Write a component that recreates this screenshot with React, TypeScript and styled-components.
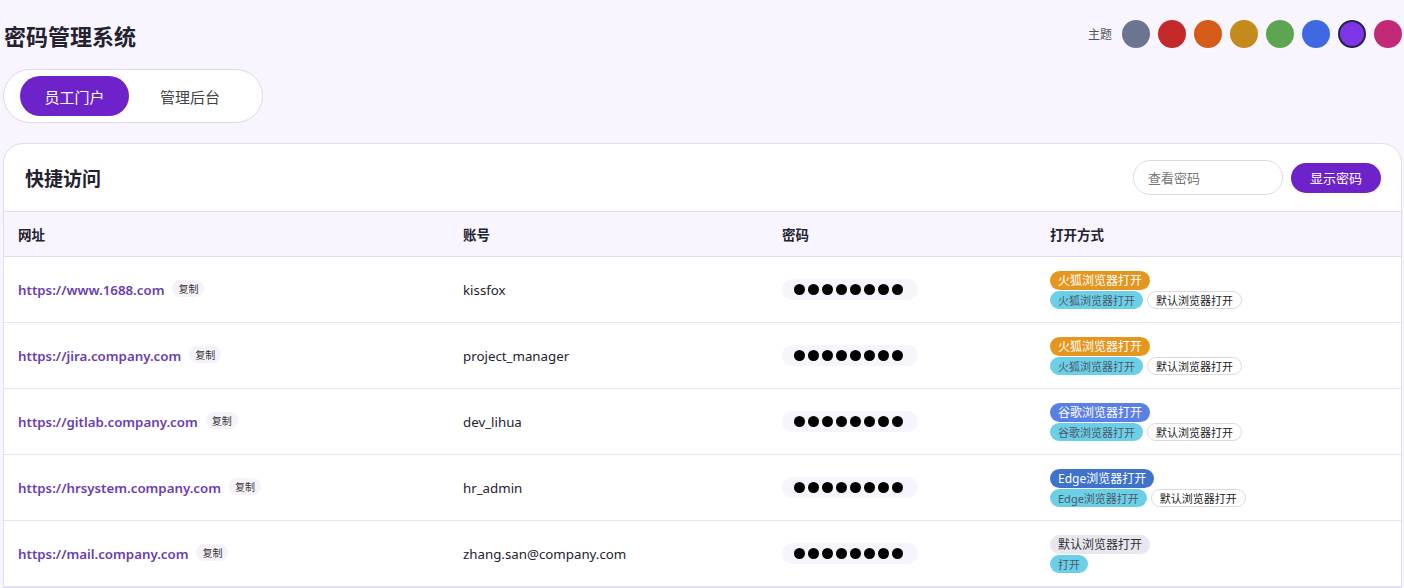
import React, { useState } from 'react';
import styled, { createGlobalStyle } from 'styled-components';

const GlobalStyle = createGlobalStyle`
  html, body {
    margin: 0;
    padding: 0;
    background: #f8f5fe;
    font-family: "Noto Sans", "Noto Sans CJK SC", sans-serif;
    color: #2b2b36;
  }
`;

const Page = styled.div`
  padding: 0 2px 0 3px;
  display: flex;
  flex-direction: column;
`;

const TopBar = styled.div`
  display: flex;
  justify-content: space-between;
  align-items: center;
  height: 70px;
  padding-left: 1px;
`;

const Title = styled.h1`
  margin: 0;
  font-size: 22px;
  font-weight: 700;
  color: #24222e;
`;

const ThemePicker = styled.div`
  display: flex;
  align-items: center;
  gap: 8px;
  margin-top: -2px;
`;

const ThemeLabel = styled.span`
  font-size: 12px;
  color: #555;
  margin-right: 2px;
`;

const Swatch = styled.button<{ $color: string; $active?: boolean }>`
  width: 28px;
  height: 28px;
  border-radius: 50%;
  padding: 0;
  background: ${p => p.$color};
  border: ${p => (p.$active ? '2px solid #2a2348' : 'none')};
  cursor: pointer;
`;

const TabGroup = styled.div`
  align-self: flex-start;
  display: flex;
  padding: 6px 16px;
  width: 260px;
  box-sizing: border-box;
  height: 54px;
  align-items: center;
  background: #fff;
  border: 1px solid #ddd8ee;
  border-radius: 27px;
  margin-top: -1px;
`;

const Tab = styled.button<{ $active?: boolean }>`
  height: 40px;
  width: 109px;
  border: none;
  border-radius: 20px;
  font-family: inherit;
  font-size: 15px;
  background: ${p => (p.$active ? '#6d23c9' : 'transparent')};
  color: ${p => (p.$active ? '#fff' : '#444')};
  cursor: pointer;
  ${p => (!p.$active ? 'margin-left: 8px; width: 106px;' : '')}
`;

const Card = styled.section`
  margin-top: 20px;
  background: #fff;
  border: 1px solid #e1dbf3;
  border-radius: 20px 20px 0 0;
  overflow: hidden;
`;

const CardHeader = styled.div`
  display: flex;
  align-items: center;
  justify-content: space-between;
  height: 67px;
  padding: 0 20px 0 21px;
`;

const CardTitle = styled.h2`
  margin: 0;
  font-size: 19px;
  font-weight: 700;
  color: #24222e;
`;

const Controls = styled.div`
  display: flex;
  align-items: center;
  gap: 8px;
`;

const SearchInput = styled.input`
  width: 150px;
  height: 35px;
  box-sizing: border-box;
  border: 1px solid #dcd8e6;
  border-radius: 18px;
  padding: 0 14px;
  font-family: inherit;
  font-size: 13px;
  outline: none;
  &::placeholder { color: #777; }
`;

const ShowButton = styled.button`
  width: 90px;
  height: 30px;
  border: none;
  border-radius: 15px;
  background: #6d23c9;
  color: #fff;
  font-family: inherit;
  font-size: 13px;
  cursor: pointer;
`;

const Table = styled.table`
  width: 100%;
  border-collapse: collapse;
  table-layout: fixed;
`;

const Th = styled.th<{ $w: string }>`
  width: ${p => p.$w};
  box-sizing: border-box;
  height: 45px;
  padding: 0 14px;
  text-align: left;
  font-size: 13.5px;
  font-weight: 700;
  color: #24222e;
  background: #f8f5fe;
  border-top: 1px solid #e1dbf3;
  border-bottom: 1px solid #e1dbf3;
`;

const Td = styled.td`
  height: 65px;
  padding: 0 14px;
  font-size: 13.3px;
  color: #24222e;
  border-bottom: 1px solid #e6e1f4;
  vertical-align: middle;
`;

const UrlLink = styled.a`
  color: #6a3db5;
  font-weight: 600;
  font-size: 13.3px;
  text-decoration: none;
`;

const CopyTag = styled.span`
  display: inline-block;
  margin-left: 8px;
  padding: 1px 6px;
  border-radius: 8px;
  background: #f5f3f9;
  font-size: 10px;
  color: #333;
  vertical-align: 2px;
`;

const Dots = styled.span`
  display: inline-flex;
  align-items: center;
  gap: 2.6px;
  height: 21px;
  padding: 0 12px;
  width: 136px;
  box-sizing: border-box;
  border-radius: 11px;
  background: #f7f5fc;
`;

const Dot = styled.i`
  display: block;
  width: 11.4px;
  height: 11.4px;
  border-radius: 50%;
  background: #000;
`;

const Methods = styled.div`
  display: flex;
  flex-direction: column;
  align-items: flex-start;
  gap: 1px;
`;

const MethodRow = styled.div`
  display: flex;
  gap: 4px;
`;

type Kind = 'firefox' | 'chrome' | 'edge' | 'default' | 'cyan' | 'outline';

const kindStyles: Record<Kind, string> = {
  firefox: 'background:#e5961f;color:#fff;font-size:12px;height:19px;',
  chrome: 'background:#5a80e6;color:#fff;font-size:12px;height:19px;',
  edge: 'background:#3e72cc;color:#fff;font-size:12px;height:19px;',
  default: 'background:#e8e7ef;color:#333;font-size:12px;height:19px;',
  cyan: 'background:#6ccfe8;color:#4d5a66;font-size:11px;height:18px;',
  outline: 'background:#fff;color:#222;font-size:11px;height:18px;border:1px solid #dcd8e6;',
};

const Badge = styled.span<{ $kind: Kind }>`
  display: inline-flex;
  align-items: center;
  box-sizing: border-box;
  padding: 0 8px;
  border-radius: 10px;
  white-space: nowrap;
  ${p => kindStyles[p.$kind]}
`;

interface Entry {
  url: string;
  account: string;
  primary: { kind: Kind; label: string };
  secondary: string;
  fallback: boolean;
}

const entries: Entry[] = [
  { url: 'https://www.1688.com', account: 'kissfox', primary: { kind: 'firefox', label: '火狐浏览器打开' }, secondary: '火狐浏览器打开', fallback: true },
  { url: 'https://jira.company.com', account: 'project_manager', primary: { kind: 'firefox', label: '火狐浏览器打开' }, secondary: '火狐浏览器打开', fallback: true },
  { url: 'https://gitlab.company.com', account: 'dev_lihua', primary: { kind: 'chrome', label: '谷歌浏览器打开' }, secondary: '谷歌浏览器打开', fallback: true },
  { url: 'https://hrsystem.company.com', account: 'hr_admin', primary: { kind: 'edge', label: 'Edge浏览器打开' }, secondary: 'Edge浏览器打开', fallback: true },
  { url: 'https://mail.company.com', account: 'zhang.san@company.com', primary: { kind: 'default', label: '默认浏览器打开' }, secondary: '打开', fallback: false },
];

const themes = ['#6b7590', '#c42a2a', '#d65a18', '#c48b1c', '#5ea552', '#3f69e3', '#7d35e6', '#c22a78'];

export default function App() {
  const [tab, setTab] = useState(0);
  const [theme, setTheme] = useState(6);

  return (
    <Page>
      <GlobalStyle />
      <TopBar>
        <Title>密码管理系统</Title>
        <ThemePicker>
          <ThemeLabel>主题</ThemeLabel>
          {themes.map((c, i) => (
            <Swatch key={c} $color={c} $active={i === theme} onClick={() => setTheme(i)} />
          ))}
        </ThemePicker>
      </TopBar>

      <TabGroup>
        <Tab $active={tab === 0} onClick={() => setTab(0)}>员工门户</Tab>
        <Tab $active={tab === 1} onClick={() => setTab(1)}>管理后台</Tab>
      </TabGroup>

      <Card>
        <CardHeader>
          <CardTitle>快捷访问</CardTitle>
          <Controls>
            <SearchInput placeholder="查看密码" />
            <ShowButton>显示密码</ShowButton>
          </Controls>
        </CardHeader>
        <Table>
          <thead>
            <tr>
              <Th $w="445px">网址</Th>
              <Th $w="319px">账号</Th>
              <Th $w="268px">密码</Th>
              <Th $w="auto">打开方式</Th>
            </tr>
          </thead>
          <tbody>
            {entries.map(e => (
              <tr key={e.url}>
                <Td>
                  <UrlLink href="#">{e.url}</UrlLink>
                  <CopyTag>复制</CopyTag>
                </Td>
                <Td>{e.account}</Td>
                <Td>
                  <Dots>
                    {Array.from({ length: 8 }, (_, i) => <Dot key={i} />)}
                  </Dots>
                </Td>
                <Td>
                  <Methods>
                    <Badge $kind={e.primary.kind}>{e.primary.label}</Badge>
                    <MethodRow>
                      <Badge $kind="cyan">{e.secondary}</Badge>
                      {e.fallback && <Badge $kind="outline">默认浏览器打开</Badge>}
                    </MethodRow>
                  </Methods>
                </Td>
              </tr>
            ))}
          </tbody>
        </Table>
      </Card>
    </Page>
  );
}
